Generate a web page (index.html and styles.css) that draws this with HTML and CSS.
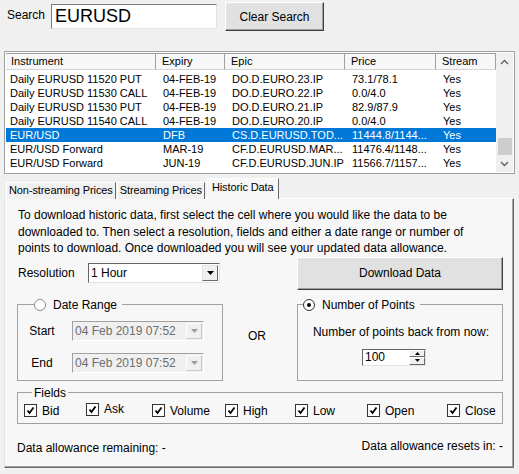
FILE: index.html
```html
<!DOCTYPE html>
<html lang="en">
<head>
<meta charset="UTF-8">
<meta name="viewport" content="width=device-width, initial-scale=1.0">
<title>Market Search</title>
<link rel="stylesheet" href="styles.css">
</head>
<body>
<div class="window">
    <div class="search-bar">
        <label class="search-label" for="search">Search</label>
        <input class="search-box" id="search" type="text" value="EURUSD">
        <button class="btn clear-btn">Clear Search</button>
    </div>

    <div class="list">
        <div class="list-body">
            <table class="grid">
                <colgroup>
                    <col class="c-inst"><col class="c-exp"><col class="c-epic"><col class="c-price"><col class="c-stream">
                </colgroup>
                <thead>
                    <tr>
                        <th class="first">Instrument</th>
                        <th>Expiry</th>
                        <th>Epic</th>
                        <th>Price</th>
                        <th>Stream</th>
                    </tr>
                </thead>
                <tbody>
                    <tr><td class="first">Daily EURUSD 11520 PUT</td><td>04-FEB-19</td><td>DO.D.EURO.23.IP</td><td>73.1/78.1</td><td>Yes</td></tr>
                    <tr><td class="first">Daily EURUSD 11530 CALL</td><td>04-FEB-19</td><td>DO.D.EURO.22.IP</td><td>0.0/4.0</td><td>Yes</td></tr>
                    <tr><td class="first">Daily EURUSD 11530 PUT</td><td>04-FEB-19</td><td>DO.D.EURO.21.IP</td><td>82.9/87.9</td><td>Yes</td></tr>
                    <tr><td class="first">Daily EURUSD 11540 CALL</td><td>04-FEB-19</td><td>DO.D.EURO.20.IP</td><td>0.0/4.0</td><td>Yes</td></tr>
                    <tr class="selected"><td class="first">EUR/USD</td><td>DFB</td><td>CS.D.EURUSD.TOD...</td><td>11444.8/1144...</td><td>Yes</td></tr>
                    <tr><td class="first">EUR/USD Forward</td><td>MAR-19</td><td>CF.D.EURUSD.MAR...</td><td>11476.4/1148...</td><td>Yes</td></tr>
                    <tr><td class="first">EUR/USD Forward</td><td>JUN-19</td><td>CF.D.EURUSD.JUN.IP</td><td>11566.7/1157...</td><td>Yes</td></tr>
                </tbody>
            </table>
        </div>
        <div class="scrollbar">
            <div class="sb-arrow">
                <svg width="9" height="6" viewBox="0 0 9 6"><polyline points="1,5 4.5,1.5 8,5" fill="none" stroke="#606060" stroke-width="1.4"/></svg>
            </div>
            <div class="sb-track">
                <div class="sb-thumb" style="margin-top: 68px"></div>
            </div>
            <div class="sb-arrow">
                <svg width="9" height="6" viewBox="0 0 9 6"><polyline points="1,1 4.5,4.5 8,1" fill="none" stroke="#606060" stroke-width="1.4"/></svg>
            </div>
        </div>
    </div>

    <div class="tabs">
        <div class="tab">Non-streaming Prices</div>
        <div class="tab">Streaming Prices</div>
        <div class="tab active">Historic Data</div>
    </div>

    <div class="panel">
        <p class="intro">To download historic data, first select the cell where you would like the data to be<br>
        downloaded to. Then select a resolution, fields and either a date range or number of<br>
        points to download. Once downloaded you will see your updated data allowance.</p>

        <div class="res-row">
            <div class="res-left">
                <span class="res-label">Resolution</span>
                <div class="combo">
                    <span class="combo-text">1 Hour</span>
                    <span class="combo-btn">
                        <svg width="7" height="4" viewBox="0 0 7 4"><polygon points="0,0 7,0 3.5,4" fill="#000"/></svg>
                    </span>
                </div>
            </div>
            <button class="btn download-btn">Download Data</button>
        </div>

        <div class="groups">
            <fieldset class="group date-group">
                <legend><span class="radio"></span>Date Range</legend>
                <div class="dr-row">
                    <span class="dr-label">Start</span>
                    <div class="combo disabled">
                        <span class="combo-text">04 Feb 2019 07:52</span>
                        <span class="combo-btn">
                            <svg width="7" height="4" viewBox="0 0 7 4"><polygon points="0,0 7,0 3.5,4" fill="#a0a0a0"/></svg>
                        </span>
                    </div>
                </div>
                <div class="dr-row">
                    <span class="dr-label">End</span>
                    <div class="combo disabled">
                        <span class="combo-text">04 Feb 2019 07:52</span>
                        <span class="combo-btn">
                            <svg width="7" height="4" viewBox="0 0 7 4"><polygon points="0,0 7,0 3.5,4" fill="#a0a0a0"/></svg>
                        </span>
                    </div>
                </div>
            </fieldset>

            <div class="or">OR</div>

            <fieldset class="group points-group">
                <legend><span class="radio checked"></span>Number of Points</legend>
                <div class="points-label">Number of points back from now:</div>
                <div class="spinner">
                    <span class="spin-text">100</span>
                    <span class="spin-btns">
                        <span class="spin-btn"><svg width="5" height="3" viewBox="0 0 5 3"><polygon points="0,3 5,3 2.5,0" fill="#000"/></svg></span>
                        <span class="spin-btn"><svg width="5" height="3" viewBox="0 0 5 3"><polygon points="0,0 5,0 2.5,3" fill="#000"/></svg></span>
                    </span>
                </div>
            </fieldset>
        </div>

        <fieldset class="group fields-group">
            <legend class="plain">Fields</legend>
            <div class="fields">
                <span class="field"><span class="check"><svg width="9" height="9" viewBox="0 0 9 9"><polyline points="1.5,4.5 3.5,7 7.5,1.5" fill="none" stroke="#000" stroke-width="1.8"/></svg></span>Bid</span>
                <span class="field ask"><span class="check"><svg width="9" height="9" viewBox="0 0 9 9"><polyline points="1.5,4.5 3.5,7 7.5,1.5" fill="none" stroke="#000" stroke-width="1.8"/></svg></span>Ask</span>
                <span class="field"><span class="check"><svg width="9" height="9" viewBox="0 0 9 9"><polyline points="1.5,4.5 3.5,7 7.5,1.5" fill="none" stroke="#000" stroke-width="1.8"/></svg></span>Volume</span>
                <span class="field"><span class="check"><svg width="9" height="9" viewBox="0 0 9 9"><polyline points="1.5,4.5 3.5,7 7.5,1.5" fill="none" stroke="#000" stroke-width="1.8"/></svg></span>High</span>
                <span class="field"><span class="check"><svg width="9" height="9" viewBox="0 0 9 9"><polyline points="1.5,4.5 3.5,7 7.5,1.5" fill="none" stroke="#000" stroke-width="1.8"/></svg></span>Low</span>
                <span class="field"><span class="check"><svg width="9" height="9" viewBox="0 0 9 9"><polyline points="1.5,4.5 3.5,7 7.5,1.5" fill="none" stroke="#000" stroke-width="1.8"/></svg></span>Open</span>
                <span class="field"><span class="check"><svg width="9" height="9" viewBox="0 0 9 9"><polyline points="1.5,4.5 3.5,7 7.5,1.5" fill="none" stroke="#000" stroke-width="1.8"/></svg></span>Close</span>
            </div>
        </fieldset>

        <div class="allowance">
            <span>Data allowance remaining: -</span>
            <span class="resets">Data allowance resets in: -</span>
        </div>
    </div>
</div>
</body>
</html>
```

FILE: styles.css
```css
* {
    font-family: "Liberation Sans", Arial, Helvetica, sans-serif;
    box-sizing: border-box;
}
body {
    margin: 0;
    background-color: #f0f0f0;
    color: #000;
    font-size: 12px;
}
.window {
    width: 519px;
    height: 474px;
}

/* search bar */
.search-bar {
    display: flex;
    align-items: flex-start;
    height: 51px;
    padding: 2px 0 0 7px;
}
.search-label {
    width: 44px;
    margin-top: 6px;
    line-height: 14px;
}
.search-box {
    width: 166px;
    height: 25px;
    margin-top: 2px;
    padding: 0 3px;
    border: 1px solid;
    border-color: #7a7a7a #e3e3e3 #e3e3e3 #7a7a7a;
    background: #fff;
    font-size: 18px;
    color: #000;
    outline: none;
}
.btn {
    background-color: #e1e1e1;
    border: 1px solid;
    border-color: #fff #404040 #404040 #fff;
    box-shadow: inset -1px -1px #a0a0a0, inset 1px 1px #e3e3e3;
    font-size: 12px;
    color: #000;
    padding: 0;
}
.clear-btn {
    width: 99px;
    height: 29px;
    margin-left: 8px;
}

/* instrument list */
.list {
    display: flex;
    width: 511px;
    height: 123px;
    margin-left: 4px;
    padding: 1px;
    border: 1px solid #a0a0a0;
    background: #fff;
}
.list-body {
    width: 490px;
    overflow: hidden;
}
.grid {
    width: 490px;
    table-layout: fixed;
    border-collapse: separate;
    border-spacing: 0;
    font-size: 11px;
}
.c-inst { width: 150px; }
.c-exp { width: 69px; }
.c-epic { width: 120px; }
.c-price { width: 91px; }
.c-stream { width: 60px; }
.grid th {
    height: 17px;
    padding: 0 0 0 6px;
    line-height: 15px;
    font-weight: normal;
    text-align: left;
    background: #f7f7f7;
    border-top: 1px solid #a0a0a0;
    border-bottom: 1px solid #d5d5d5;
    border-right: 1px solid #a0a0a0;
    white-space: nowrap;
    overflow: hidden;
}
.grid th.first {
    padding-left: 5px;
}
.grid td {
    padding: 0 0 0 7px;
    line-height: 14px;
    height: 14px;
    white-space: nowrap;
    overflow: hidden;
}
.grid td.first {
    padding-left: 4px;
}
.grid tbody tr:first-child td {
    border-top: 2px solid #fff;
}
.grid tr.selected td {
    background-color: #0078d7;
    color: #fff;
}
.scrollbar {
    width: 17px;
    display: flex;
    flex-direction: column;
    background: #f0f0f0;
}
.sb-arrow {
    height: 17px;
    display: flex;
    align-items: center;
    justify-content: center;
}
.sb-track {
    flex: 1;
}
.sb-thumb {
    height: 17px;
    margin-left: 2px;
    width: 14px;
    background: #cdcdcd;
}

/* tabs */
.tabs {
    display: flex;
    align-items: flex-end;
    height: 25px;
    padding: 0 0 0 6px;
    margin-bottom: -1px;
}
.tab {
    height: 17px;
    padding: 0 2px;
    line-height: 15px;
    font-size: 11px;
    letter-spacing: -0.1px;
    background: #f0f0f0;
    border: 1px solid;
    border-color: #fff #696969 transparent #fff;
    border-bottom: none;
    margin-right: 1px;
}
.tab.active {
    position: relative;
    z-index: 1;
    height: 21px;
    margin-left: 1px;
    padding: 0 4px;
    line-height: 17px;
    background: #f7f7f7;
    border-color: #fff #696969 transparent #fff;
}

/* panel */
.panel {
    width: 510px;
    height: 270px;
    margin-left: 4px;
    padding: 8px 10px 0 12px;
    background: #f7f7f7;
    border: 1px solid;
    border-color: #fff #696969 #696969 #e3e3e3;
    box-shadow: inset -1px -1px #a0a0a0;
}
.intro {
    margin: 0 0 0 1px;
    line-height: 16.5px;
    white-space: nowrap;
}
.res-row {
    display: flex;
    justify-content: space-between;
    align-items: center;
    height: 33px;
}
.res-left {
    display: flex;
    align-items: center;
}
.res-label {
    width: 71px;
    padding-left: 1px;
}
.combo {
    display: flex;
    align-items: center;
    width: 132px;
    height: 20px;
    background: #fff;
    border: 1px solid;
    border-color: #646464 #e3e3e3 #e3e3e3 #646464;
}
.combo-text {
    flex: 1;
    padding-left: 2px;
    white-space: nowrap;
}
.combo-btn {
    width: 16px;
    height: 16px;
    margin-right: 1px;
    display: flex;
    align-items: center;
    justify-content: center;
    background: #f0f0f0;
    border: 1px solid;
    border-color: #e3e3e3 #696969 #696969 #e3e3e3;
}
.combo.disabled {
    background: #f0f0f0;
    border-color: #a0a0a0 #fff #fff #a0a0a0;
    color: #6d6d6d;
}
.combo.disabled .combo-btn {
    border-color: #fff #c8c8c8 #c8c8c8 #fff;
}
.download-btn {
    width: 206px;
    height: 33px;
}

/* option groups */
.groups {
    display: grid;
    grid-template-columns: 206px 74px 206px;
    margin-top: 8px;
}
.group {
    margin: 0;
    padding: 0;
    border: 1px solid #a0a0a0;
}
.group legend {
    display: flex;
    align-items: center;
    margin-left: 5px;
    padding: 0 5px 0 0;
    line-height: 14px;
}
.group legend.plain {
    margin-left: 8px;
    padding: 0 2px;
}
.radio {
    width: 12px;
    height: 12px;
    margin-right: 7px;
    border: 1px solid #8a8a8a;
    border-radius: 50%;
    background: #fff;
    display: flex;
    align-items: center;
    justify-content: center;
}
.radio.checked {
    border-color: #333;
}
.radio.checked::after {
    content: "";
    width: 4px;
    height: 4px;
    border-radius: 50%;
    background: #000;
}
.date-group {
    padding: 9px 0 7px 11px;
}
.dr-row {
    display: flex;
    align-items: center;
}
.dr-row + .dr-row {
    margin-top: 12px;
}
.dr-label {
    width: 26px;
    margin-right: 17px;
    text-align: center;
}
.or {
    display: flex;
    align-items: center;
    justify-content: center;
    padding: 0 6px 6px 0;
}
.points-group {
    display: flex;
    flex-direction: column;
    align-items: center;
    padding: 13px 0 14px;
}
.points-label {
    line-height: 14px;
    padding-left: 2px;
}
.spinner {
    display: flex;
    width: 64px;
    height: 17px;
    margin: 10px 12px 0 0;
    background: #fff;
    border: 1px solid;
    border-color: #646464 #e3e3e3 #e3e3e3 #646464;
}
.spin-text {
    flex: 1;
    padding-left: 2px;
    line-height: 15px;
}
.spin-btns {
    width: 16px;
    display: flex;
    flex-direction: column;
}
.spin-btn {
    flex: 1;
    display: flex;
    align-items: center;
    justify-content: center;
    background: #f0f0f0;
    border: 1px solid;
    border-color: #fff #696969 #696969 #fff;
}
.fields-group {
    margin-top: 5px;
    padding: 4px 0 5px 6px;
}
.fields {
    display: grid;
    grid-template-columns: 62px 66px 73px 70px 72px 80px auto;
    line-height: 14px;
}
.field {
    display: flex;
    align-items: center;
}
.field.ask {
    margin-top: -3px;
}
.check {
    width: 13px;
    height: 13px;
    margin-right: 5px;
    border: 1px solid #333;
    background: #fff;
    display: flex;
    align-items: center;
    justify-content: center;
}
.allowance {
    display: flex;
    justify-content: space-between;
    margin-top: 17px;
    line-height: 14px;
}
.resets {
    margin-top: -2px;
}
```
